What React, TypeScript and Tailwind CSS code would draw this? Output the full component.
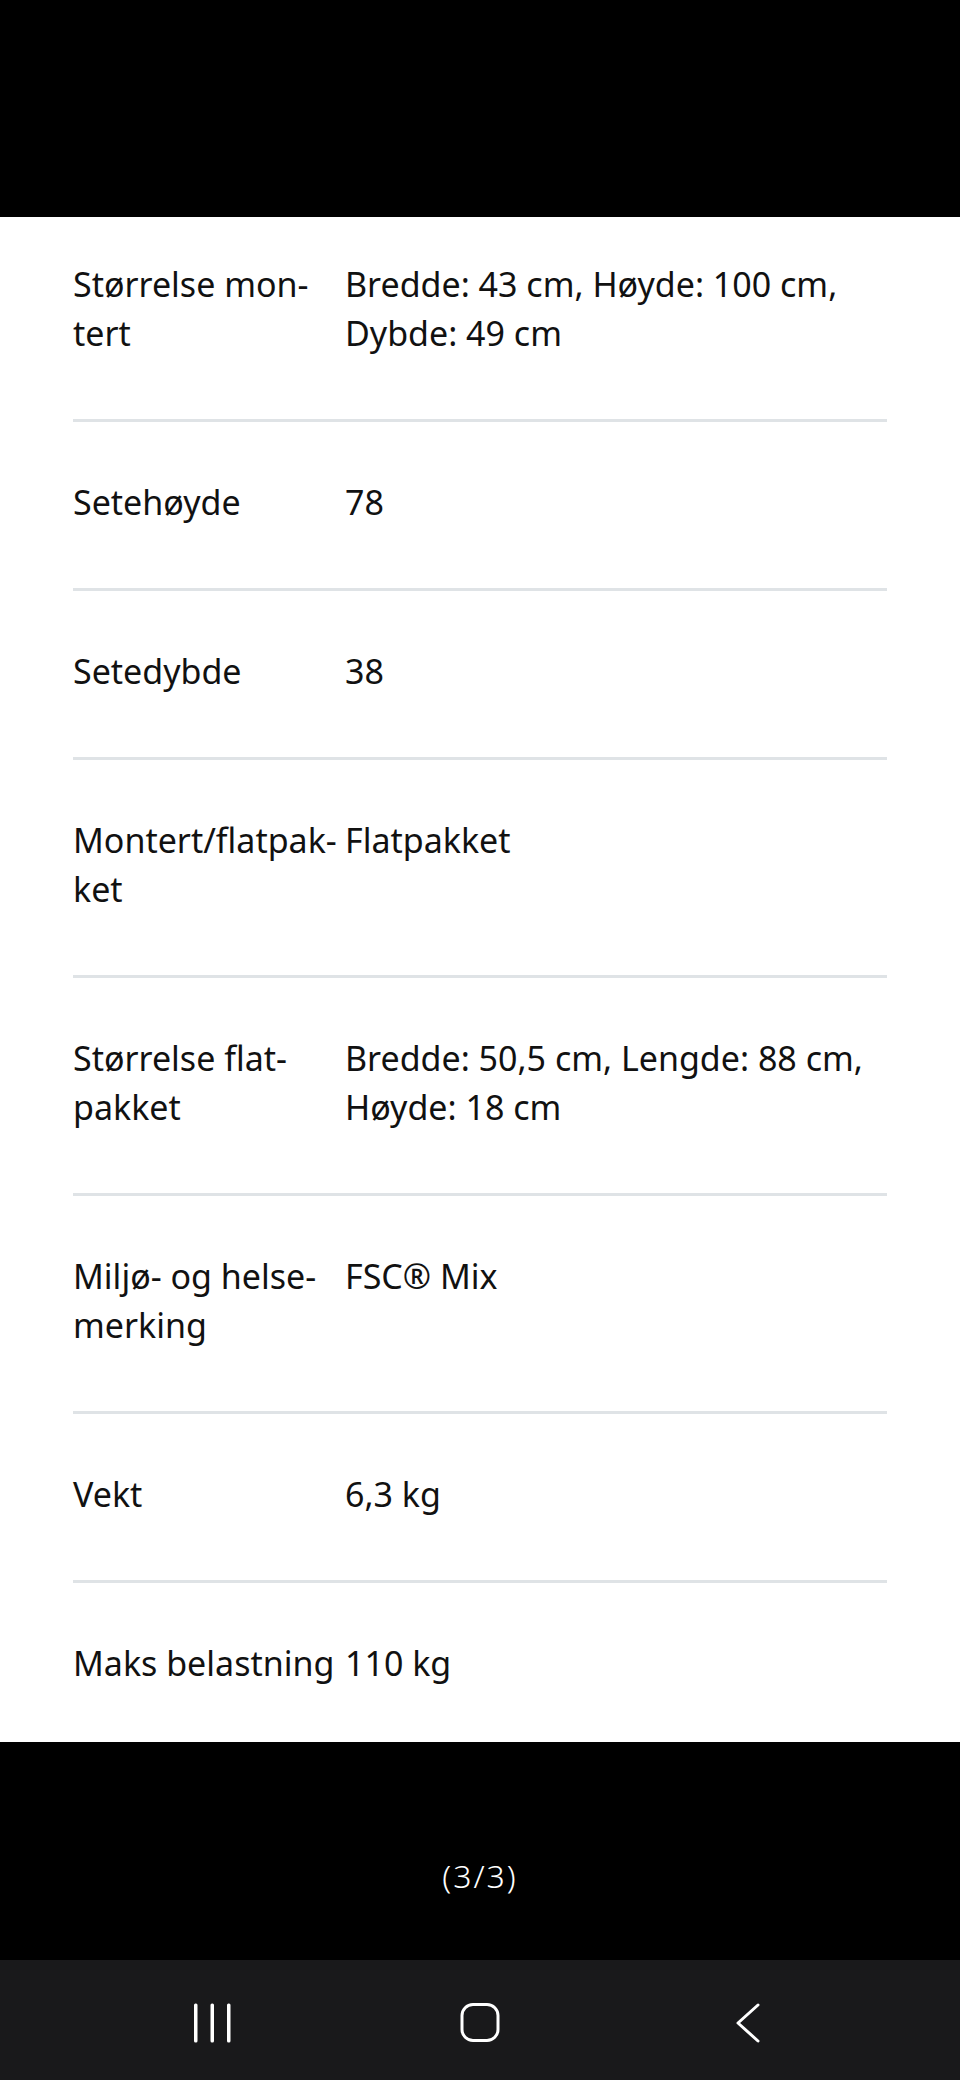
const rows: { label: string[]; value: string[] }[] = [
  { label: ["Størrelse mon-", "tert"], value: ["Bredde: 43 cm, Høyde: 100 cm,", "Dybde: 49 cm"] },
  { label: ["Setehøyde"], value: ["78"] },
  { label: ["Setedybde"], value: ["38"] },
  { label: ["Montert/flatpak-", "ket"], value: ["Flatpakket"] },
  { label: ["Størrelse flat-", "pakket"], value: ["Bredde: 50,5 cm, Lengde: 88 cm,", "Høyde: 18 cm"] },
  { label: ["Miljø- og helse-", "merking"], value: ["FSC® Mix"] },
  { label: ["Vekt"], value: ["6,3 kg"] },
  { label: ["Maks belastning"], value: ["110 kg"] },
];

export default function App() {
  return (
    <main className="flex w-[960px] h-[2080px] flex-col bg-black font-['Noto_Sans',sans-serif]">
      <div className="h-[217px] bg-black" />

      {/* product details list */}
      <div className="bg-white px-[73px] text-[34px] leading-[49px] text-[#111111]">
        {rows.map((row, i) => (
          <div
            key={i}
            className={
              i === 0
                ? "grid grid-cols-[272px_1fr] pt-[43px] pb-[61px]"
                : i === rows.length - 1
                ? "grid grid-cols-[272px_1fr] border-t-[3px] border-[#dfe3e6] pt-[56px] pb-[54px]"
                : "grid grid-cols-[272px_1fr] border-t-[3px] border-[#dfe3e6] pt-[56px] pb-[61px]"
            }
          >
            <div className="whitespace-nowrap">
              {row.label.map((l) => (
                <div key={l}>{l}</div>
              ))}
            </div>
            <div className="whitespace-nowrap">
              {row.value.map((v) => (
                <div key={v}>{v}</div>
              ))}
            </div>
          </div>
        ))}
      </div>

      <div className="h-[218px] bg-black flex justify-center pt-[114px]">
        <span className="text-white text-[32px] leading-[40px] font-light tracking-[2px]">(3/3)</span>
      </div>

      {/* android nav bar */}
      <div className="h-[120px] bg-[#19191b] flex justify-center pt-[43px]">
        <div className="w-[268px] flex justify-center">
          <svg width="37" height="40" viewBox="0 0 37 40" fill="white">
            <rect x="0" y="0.5" width="3.5" height="39" rx="1.5" />
            <rect x="16.5" y="0.5" width="3.5" height="39" rx="1.5" />
            <rect x="33" y="0.5" width="3.5" height="39" rx="1.5" />
          </svg>
        </div>
        <div className="w-[268px] flex justify-center">
          <svg width="40" height="40" viewBox="0 0 40 40" fill="none" stroke="white" strokeWidth={3}>
            <rect x="2" y="1.5" width="36" height="36" rx="11" />
          </svg>
        </div>
        <div className="w-[268px] flex justify-center">
          <svg width="26" height="40" viewBox="0 0 26 40" fill="none" stroke="white" strokeWidth={3} strokeLinecap="round" strokeLinejoin="round">
            <polyline points="23,2 3,20 23,38" />
          </svg>
        </div>
      </div>
    </main>
  );
}
